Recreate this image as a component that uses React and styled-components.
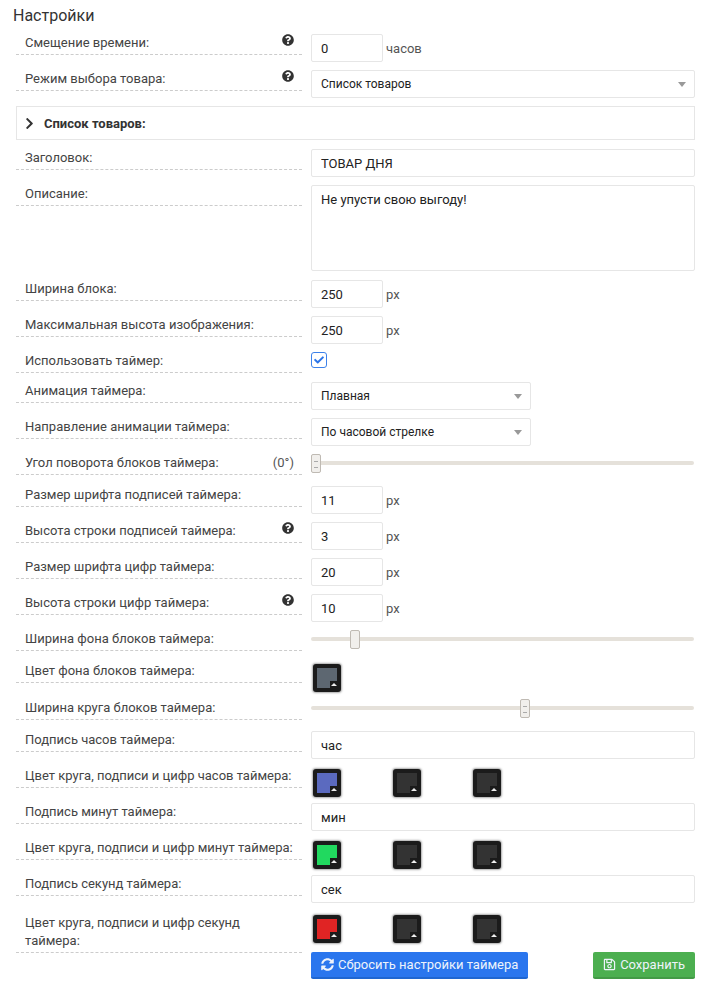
import styled, { createGlobalStyle } from "styled-components";
import { FaQuestionCircle, FaChevronRight, FaSyncAlt, FaRegSave, FaCheck } from "react-icons/fa";

const GlobalStyle = createGlobalStyle`
  html, body {
    margin: 0;
    padding: 0;
    background: #fff;
  }
  body {
    font-family: Roboto, "Liberation Sans", sans-serif;
    font-size: 13px;
    color: #333;
  }
  * {
    box-sizing: border-box;
  }
`;

const Page = styled.div`
  width: 706px;
  height: 987px;
  overflow: hidden;
  padding: 6px 11px 0 16px;
`;

const Title = styled.h2`
  margin: 0 0 0 -3px;
  height: 28px;
  font-size: 16px;
  font-weight: 400;
  line-height: 20px;
  color: #333;
`;

const Row = styled.div`
  display: flex;
  align-items: flex-start;
  height: ${(props) => props.$h || 36}px;
  padding-top: ${(props) => (props.$tall ? 2 : 0)}px;
`;

const Label = styled.div`
  position: relative;
  width: 286px;
  margin-top: ${(props) => (props.$tall ? 1 : 0)}px;
  margin-right: 9px;
  padding: 0 9px ${(props) => (props.$tall ? 2 : 3)}px;
  border-bottom: 1px dashed #ccc;
  line-height: ${(props) => (props.$tall ? 18 : 17)}px;
  font-size: 13px;
  color: #444;
`;

const Help = styled.span`
  position: absolute;
  right: 8px;
  top: 0;
  font-size: 12px;
  color: #333;
`;

const Angle = styled.span`
  position: absolute;
  right: 8px;
  top: 0;
  color: #555;
`;

const Field = styled.div`
  flex: 1;
  display: flex;
  align-items: center;
  min-width: 0;
`;

const Input = styled.input`
  width: ${(props) => (props.$small ? "72px" : "100%")};
  height: 28px;
  padding: 0 9px;
  border: 1px solid #e6e6e6;
  border-radius: 2px;
  font: 13px Roboto, sans-serif;
  color: #222;
  background: #fff;
  outline: none;
`;

const Area = styled.textarea`
  width: 100%;
  height: 86px;
  padding: 5px 9px;
  border: 1px solid #e6e6e6;
  border-radius: 2px;
  font: 13px/17px Roboto, sans-serif;
  color: #222;
  resize: none;
  outline: none;
`;

const Unit = styled.span`
  margin-left: 3px;
  color: #555;
`;

const Select = styled.div`
  display: flex;
  align-items: center;
  justify-content: space-between;
  width: ${(props) => props.$width || "100%"};
  height: 28px;
  padding: 0 8px 0 9px;
  border: 1px solid #e6e6e6;
  border-radius: 2px;
  font-size: 12px;
  color: #222;
  &::after {
    content: "";
    border-left: 4px solid transparent;
    border-right: 4px solid transparent;
    border-top: 5px solid #999;
  }
`;

const Panel = styled.div`
  display: flex;
  align-items: center;
  height: 34px;
  margin-bottom: 9px;
  padding-left: 6px;
  border: 1px solid #e6e6e6;
  font-weight: 700;
  color: #333;
  svg {
    font-size: 13px;
    margin-right: 8px;
  }
`;

const Check = styled.span`
  display: flex;
  align-items: center;
  justify-content: center;
  width: 16px;
  height: 16px;
  border: 1px solid #3d82ea;
  border-radius: 3px;
  color: #2a74e8;
  font-size: 10px;
`;

const Track = styled.div`
  position: relative;
  width: 100%;
  height: 4px;
  margin-top: 7px;
  margin-right: 1px;
  border-radius: 2px;
  background: #e5e1da;
`;

const Thumb = styled.span`
  position: absolute;
  top: -7px;
  width: 10px;
  height: 19px;
  border: 1px solid #bfbab3;
  border-radius: 2px;
  background: #f1efec;
  &::after {
    content: "";
    position: absolute;
    left: 2px;
    right: 2px;
    top: 6px;
    height: 5px;
    border-top: 1px solid ${(props) => (props.$plain ? "transparent" : "#aaa")};
    border-bottom: 1px solid ${(props) => (props.$plain ? "transparent" : "#aaa")};
  }
`;

const Swatches = styled.div`
  display: flex;
  gap: 50px;
`;

const Swatch = styled.span`
  position: relative;
  display: block;
  width: 28px;
  height: 28px;
  margin: 2px 0 0 2px;
  padding: 4px;
  border-radius: 3px;
  background: #1b1b1b;
  box-shadow: 0 0 2px 1px #aaa;
  &::before {
    content: "";
    display: block;
    width: 20px;
    height: 20px;
    background: ${(props) => props.$color};
  }
  &::after {
    content: "";
    position: absolute;
    right: 4px;
    bottom: 4px;
    width: 7px;
    height: 7px;
    background: #1b1b1b;
  }
`;

const Caret = styled.i`
  position: absolute;
  z-index: 1;
  right: 4px;
  bottom: 6px;
  border-left: 3px solid transparent;
  border-right: 3px solid transparent;
  border-bottom: 3px solid #eee;
`;

const Buttons = styled.div`
  display: flex;
  justify-content: space-between;
  margin-left: 295px;
`;

const Button = styled.div`
  display: flex;
  align-items: center;
  gap: 4px;
  height: 27px;
  padding: 0 10px;
  border-radius: 2px;
  border-bottom: 2px solid ${(props) => (props.$green ? "#439a46" : "#1f66d0")};
  background: ${(props) => (props.$green ? "#4caf50" : "#2a76ee")};
  color: #eef3fb;
  font-size: 13px;
  font-weight: 400;
  svg {
    font-size: 13px;
  }
`;

function ColorBox({ color }) {
  return (
    <Swatch $color={color}>
      <Caret />
    </Swatch>
  );
}

function NumRow({ label, value, help, unit = "px" }) {
  return (
    <Row>
      <Label>
        {label}
        {help && (
          <Help>
            <FaQuestionCircle />
          </Help>
        )}
      </Label>
      <Field>
        <Input $small defaultValue={value} />
        <Unit>{unit}</Unit>
      </Field>
    </Row>
  );
}

function TextRow({ label, value }) {
  return (
    <Row>
      <Label>{label}</Label>
      <Field>
        <Input defaultValue={value} />
      </Field>
    </Row>
  );
}

function SliderRow({ label, left, h, plain, children }) {
  return (
    <Row $h={h}>
      <Label>
        {label}
        {children}
      </Label>
      <Field>
        <Track>
          <Thumb $plain={plain} style={{ left }} />
        </Track>
      </Field>
    </Row>
  );
}

function ColorRow({ label, color, tall }) {
  return (
    <Row $h={tall ? 41 : 36} $tall={tall}>
      <Label $tall={tall}>{label}</Label>
      <Field>
        <Swatches>
          <ColorBox color={color} />
          <ColorBox color="#333333" />
          <ColorBox color="#333333" />
        </Swatches>
      </Field>
    </Row>
  );
}

export default function App() {
  return (
    <Page>
      <GlobalStyle />
      <Title>Настройки</Title>
      <NumRow label="Смещение времени:" value="0" help unit="часов" />
      <Row>
        <Label>
          Режим выбора товара:
          <Help>
            <FaQuestionCircle />
          </Help>
        </Label>
        <Field>
          <Select>Список товаров</Select>
        </Field>
      </Row>
      <Panel>
        <FaChevronRight />
        Список товаров:
      </Panel>
      <TextRow label="Заголовок:" value="ТОВАР ДНЯ" />
      <Row $h={95}>
        <Label>Описание:</Label>
        <Field>
          <Area defaultValue="Не упусти свою выгоду!" />
        </Field>
      </Row>
      <NumRow label="Ширина блока:" value="250" />
      <NumRow label="Максимальная высота изображения:" value="250" />
      <Row $h={30}>
        <Label>Использовать таймер:</Label>
        <Field>
          <Check>
            <FaCheck />
          </Check>
        </Field>
      </Row>
      <Row>
        <Label>Анимация таймера:</Label>
        <Field>
          <Select $width="220px">Плавная</Select>
        </Field>
      </Row>
      <Row>
        <Label>Направление анимации таймера:</Label>
        <Field>
          <Select $width="220px">По часовой стрелке</Select>
        </Field>
      </Row>
      <SliderRow label="Угол поворота блоков таймера:" left="0" h={32}>
        <Angle>(0°)</Angle>
      </SliderRow>
      <NumRow label="Размер шрифта подписей таймера:" value="11" />
      <NumRow label="Высота строки подписей таймера:" value="3" help />
      <NumRow label="Размер шрифта цифр таймера:" value="20" />
      <NumRow label="Высота строки цифр таймера:" value="10" help />
      <SliderRow label="Ширина фона блоков таймера:" left="39px" h={32} plain />
      <Row $h={37}>
        <Label>Цвет фона блоков таймера:</Label>
        <Field>
          <ColorBox color="#5d6771" />
        </Field>
      </Row>
      <SliderRow label="Ширина круга блоков таймера:" left="209px" h={32} />
      <TextRow label="Подпись часов таймера:" value="час" />
      <ColorRow label="Цвет круга, подписи и цифр часов таймера:" color="#5b6abf" />
      <TextRow label="Подпись минут таймера:" value="мин" />
      <ColorRow label="Цвет круга, подписи и цифр минут таймера:" color="#21d95f" />
      <TextRow label="Подпись секунд таймера:" value="сек" />
      <ColorRow label="Цвет круга, подписи и цифр секунд таймера:" color="#e02424" tall />
      <Buttons>
        <Button>
          <FaSyncAlt />
          Сбросить настройки таймера
        </Button>
        <Button $green>
          <FaRegSave />
          Сохранить
        </Button>
      </Buttons>
    </Page>
  );
}
